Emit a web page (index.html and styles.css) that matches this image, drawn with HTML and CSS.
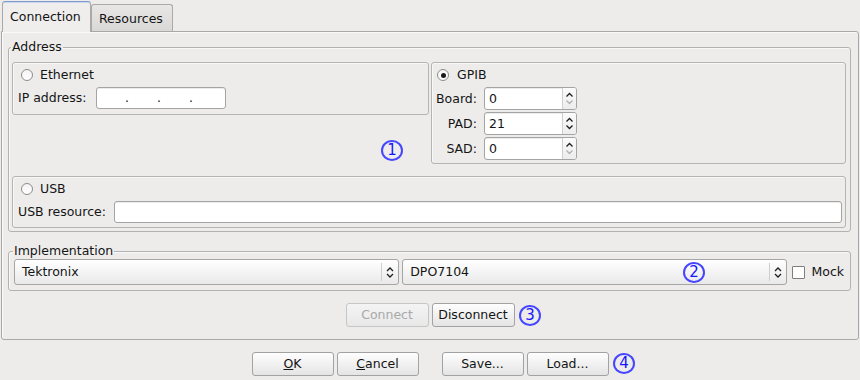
FILE: index.html
```html
<!DOCTYPE html>
<html>
<head>
<meta charset="utf-8">
<title>Connection</title>
<link rel="stylesheet" href="styles.css">
</head>
<body>
<div class="dialog">
  <div class="tabbar">
    <div class="tab active">Connection</div>
    <div class="tab">Resources</div>
  </div>
  <div class="pane">
    <fieldset class="group address">
      <legend>Address</legend>
      <div class="addr-top">
        <div class="box ethernet">
          <div class="radio-row"><span class="radio"></span><span>Ethernet</span></div>
          <div class="field-row">
            <span class="lbl ip-lbl">IP address:</span>
            <div class="input ip"><span>.</span><span>.</span><span>.</span><span></span></div>
          </div>
        </div>
        <div class="box gpib">
          <div class="radio-row"><span class="radio checked"></span><span>GPIB</span></div>
          <div class="spin-grid">
            <span class="lbl">Board:</span>
            <div class="spin"><span class="val">0</span>
              <span class="arrows">
                <svg width="9" height="6" viewBox="0 0 9 6"><path d="M1.5 4.5 L4.5 1.5 L7.5 4.5" class="chev"/></svg>
                <svg width="9" height="6" viewBox="0 0 9 6"><path d="M1.5 1.5 L4.5 4.5 L7.5 1.5" class="chev off"/></svg>
              </span>
            </div>
            <span class="lbl">PAD:</span>
            <div class="spin"><span class="val">21</span>
              <span class="arrows">
                <svg width="9" height="6" viewBox="0 0 9 6"><path d="M1.5 4.5 L4.5 1.5 L7.5 4.5" class="chev"/></svg>
                <svg width="9" height="6" viewBox="0 0 9 6"><path d="M1.5 1.5 L4.5 4.5 L7.5 1.5" class="chev"/></svg>
              </span>
            </div>
            <span class="lbl">SAD:</span>
            <div class="spin"><span class="val">0</span>
              <span class="arrows">
                <svg width="9" height="6" viewBox="0 0 9 6"><path d="M1.5 4.5 L4.5 1.5 L7.5 4.5" class="chev"/></svg>
                <svg width="9" height="6" viewBox="0 0 9 6"><path d="M1.5 1.5 L4.5 4.5 L7.5 1.5" class="chev off"/></svg>
              </span>
            </div>
          </div>
        </div>
      </div>
      <div class="box usb">
        <div class="radio-row"><span class="radio"></span><span>USB</span></div>
        <div class="field-row">
          <span class="lbl usb-lbl">USB resource:</span>
          <div class="input usb-input"></div>
        </div>
      </div>
    </fieldset>

    <fieldset class="group impl">
      <legend>Implementation</legend>
      <div class="impl-row">
        <div class="combo"><span class="ctext">Tektronix</span>
          <span class="carrow"><svg width="8" height="13" viewBox="0 0 8 13"><path d="M1 5 L4 2 L7 5 M1 8 L4 11 L7 8" class="chev"/></svg></span>
        </div>
        <div class="combo"><span class="ctext">DPO7104</span>
          <span class="carrow"><svg width="8" height="13" viewBox="0 0 8 13"><path d="M1 5 L4 2 L7 5 M1 8 L4 11 L7 8" class="chev"/></svg></span>
        </div>
        <span class="check"></span>
        <span class="mock">Mock</span>
      </div>
    </fieldset>

    <div class="btn-row">
      <button class="btn disabled">Connect</button>
      <button class="btn">Disconnect</button>
    </div>
  </div>

  <div class="dialog-buttons">
    <button class="btn"><span><u>O</u>K</span></button>
    <button class="btn"><span><u>C</u>ancel</span></button>
    <button class="btn gap-left">Save...</button>
    <button class="btn">Load...</button>
  </div>

  <span class="mark m1">1</span>
  <span class="mark m2">2</span>
  <span class="mark m3">3</span>
  <span class="mark m4">4</span>
</div>
</body>
</html>
```

FILE: styles.css
```css
* { box-sizing: border-box; }

body {
  margin: 0;
  background: #edeceb;
  font-family: "DejaVu Sans", sans-serif;
  font-size: 12.5px;
  line-height: 14px;
  color: #141414;
}

.dialog {
  position: relative;
  width: 860px;
  height: 380px;
}

/* tabs */
.tabbar {
  display: flex;
  align-items: flex-end;
  height: 31px;
  padding-left: 2px;
}
.tab {
  width: 82px;
  height: 27px;
  padding: 7px 0 0 7px;
  border: 1px solid #a9a9a9;
  border-bottom: none;
  border-radius: 3px 3px 0 0;
  background: linear-gradient(#e8e7e6, #d9d8d7);
}
.tab.active {
  position: relative;
  z-index: 1;
  width: 89px;
  height: 31px;
  margin-bottom: -1px;
  padding-top: 8px;
  background: #efeeed;
  border-color: #a9a9a9;
  border-top: 1px solid #7f9cd0;
  box-shadow: inset 0 1px 0 #c9d7ee;
}

.pane {
  margin-left: 1px;
  width: 858px;
  border: 1px solid #a8a8a8;
  border-radius: 0 3px 3px 3px;
  padding: 0 0 12px;
  box-shadow: inset 1px 1px 0 #f9f9f9;
}

/* group boxes */
fieldset.group {
  min-width: 0;
  margin: 8px 7px 0 6px;
  border: 1px solid #b2b2b2;
  border-radius: 3px;
  padding: 8px 4px 3px 3px;
  box-shadow: inset 1px 1px 0 #f8f8f8;
}
fieldset.group legend {
  padding: 0 1px;
  margin-left: -1px;
  line-height: 14px;
}

.addr-top {
  display: flex;
  align-items: flex-start;
  gap: 2px;
}

.box {
  border: 1px solid #b4b4b4;
  border-radius: 3px;
  padding: 3px 5px 4px 5px;
  box-shadow: inset 1px 1px 0 #f8f8f8;
}
.ethernet { width: 417px; padding-bottom: 5px; }
.gpib { flex: 1; padding: 3px 4px 3px 4px; }
.usb { margin-top: 12px; padding-right: 3px; }

.radio-row {
  display: flex;
  align-items: center;
  gap: 7px;
  height: 18px;
}
.radio {
  width: 12px;
  height: 12px;
  margin-left: 3px;
  border: 1px solid #8c8c8c;
  border-radius: 50%;
  background: linear-gradient(#f4f4f4, #ffffff);
  display: flex;
  align-items: center;
  justify-content: center;
}
.gpib .radio { margin-left: 1px; margin-right: 1px; }
.radio.checked::after {
  content: "";
  width: 5px;
  height: 5px;
  border-radius: 50%;
  background: #1a1a1a;
}

.field-row {
  display: flex;
  align-items: center;
  margin-top: 3px;
  height: 22px;
}
.ip-lbl { width: 78px; }
.usb-lbl { width: 96px; }

.input {
  height: 22px;
  border: 1px solid #a4a4a4;
  border-radius: 3px;
  background: #fff;
  box-shadow: inset 0 1px 0 #ececec;
}
.ip {
  width: 130px;
  display: flex;
}
.ip span {
  width: 32px;
  text-align: right;
  line-height: 20px;
}
.usb-input { flex: 1; }

/* spin boxes */
.spin-grid {
  display: grid;
  grid-template-columns: max-content 93px;
  justify-content: start;
  column-gap: 7px;
  row-gap: 2px;
  margin-top: 3px;
  align-items: center;
}
.spin-grid .lbl { justify-self: end; }
.spin {
  height: 23px;
  display: flex;
  border: 1px solid #a4a4a4;
  border-radius: 3px;
  background: #fff;
  box-shadow: inset 0 1px 0 #ececec;
}
.spin .val {
  flex: 1;
  padding-left: 4px;
  line-height: 21px;
}
.arrows {
  width: 14px;
  display: flex;
  flex-direction: column;
  justify-content: space-around;
  align-items: center;
  padding: 3px 0;
  border-left: 1px solid #cfcfcf;
  background: linear-gradient(#fbfbfb, #ededed);
  border-radius: 0 2px 2px 0;
}
.arrows svg { display: block; }

.chev {
  fill: none;
  stroke: #1e1e1e;
  stroke-width: 1.3;
}
.chev.off { stroke: #b0b0b0; }

/* implementation */
fieldset.impl {
  margin-top: 12px;
  padding: 1px 6px 5px 5px;
}
.impl-row {
  display: flex;
  align-items: center;
}
.combo {
  flex: 1;
  height: 26px;
  display: flex;
  align-items: stretch;
  border: 1px solid #a5a5a5;
  border-radius: 3px;
  background: linear-gradient(#ffffff, #e9e9e9);
}
.combo + .combo { margin-left: 3px; }
.ctext {
  flex: 1;
  padding-left: 7px;
  line-height: 24px;
}
.carrow {
  width: 17px;
  margin: 3px 0;
  border-left: 1px solid #cdcdcd;
  display: flex;
  align-items: center;
  justify-content: center;
}
.carrow svg { display: block; }
.check {
  width: 13px;
  height: 13px;
  margin-left: 5px;
  border: 1px solid #7d7d7d;
  border-radius: 1px;
  background: #fff;
}
.mock { margin-left: 6px; }

/* buttons */
.btn {
  width: 83px;
  height: 24px;
  padding: 0;
  font: inherit;
  line-height: 14px;
  color: #141414;
  border: 1px solid #a2a2a2;
  border-radius: 3px;
  background: linear-gradient(#fefefe, #e4e4e4);
  display: flex;
  align-items: center;
  justify-content: center;
}
.btn.disabled {
  color: #a9a9a9;
  border-color: #c6c6c6;
  background: linear-gradient(#f4f4f4, #e8e8e8);
}
.btn-row {
  display: flex;
  justify-content: center;
  gap: 3px;
  margin-top: 12px;
}
.dialog-buttons {
  display: flex;
  justify-content: center;
  gap: 3px;
  margin-top: 12px;
}
.dialog-buttons .btn { width: 82px; }
.gap-left { margin-left: 20px; }

/* annotation markers */
.mark {
  position: absolute;
  width: 22px;
  height: 21px;
  border: 2px solid #4646ff;
  border-radius: 50%;
  color: #1616ff;
  font-size: 15px;
  line-height: 1;
  display: flex;
  align-items: center;
  justify-content: center;
}
.m1 { left: 381px; top: 140px; }
.m2 { left: 683px; top: 262px; }
.m3 { left: 519px; top: 305px; }
.m4 { left: 613px; top: 353px; }
```
